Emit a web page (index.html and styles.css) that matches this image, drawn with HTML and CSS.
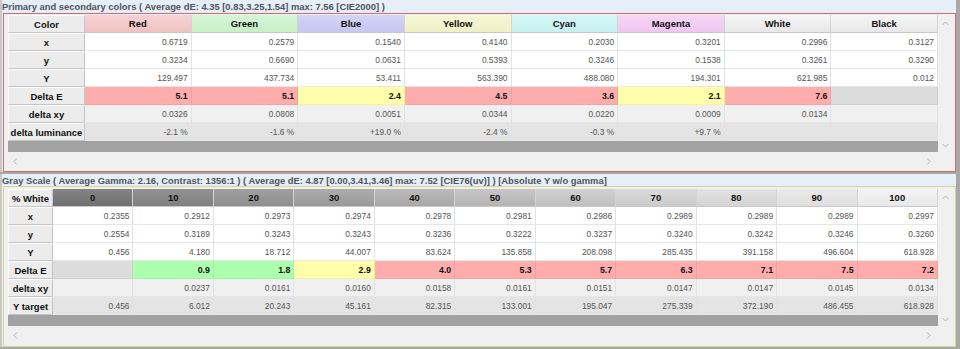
FILE: index.html
```html
<!DOCTYPE html>
<html>
<head>
<meta charset="utf-8">
<link rel="stylesheet" href="styles.css">
</head>
<body>
<div class="page">
  <section class="panel panel-primary">
    <div class="panel-title">Primary and secondary colors ( Average dE: 4.35 [0.83,3.25,1.54] max: 7.56 [CIE2000] )</div>
    <div class="panel-frame frame-red">
      <div class="widget">
        <div class="main">
          <div class="grid grid-colors">
            <div class="hd hd-first">Color</div>
            <div class="hd hd-red">Red</div>
            <div class="hd hd-green">Green</div>
            <div class="hd hd-blue">Blue</div>
            <div class="hd hd-yellow">Yellow</div>
            <div class="hd hd-cyan">Cyan</div>
            <div class="hd hd-magenta">Magenta</div>
            <div class="hd hd-neutral">White</div>
            <div class="hd hd-neutral">Black</div>

            <div class="rh">x</div>
            <div class="c">0.6719</div><div class="c">0.2579</div><div class="c">0.1540</div><div class="c">0.4140</div><div class="c">0.2030</div><div class="c">0.3201</div><div class="c">0.2996</div><div class="c">0.3127</div>

            <div class="rh">y</div>
            <div class="c">0.3234</div><div class="c">0.6690</div><div class="c">0.0631</div><div class="c">0.5393</div><div class="c">0.3246</div><div class="c">0.1538</div><div class="c">0.3261</div><div class="c">0.3290</div>

            <div class="rh">Y</div>
            <div class="c">129.497</div><div class="c">437.734</div><div class="c">53.411</div><div class="c">563.390</div><div class="c">488.080</div><div class="c">194.301</div><div class="c">621.985</div><div class="c">0.012</div>

            <div class="rh">Delta E</div>
            <div class="c de bad">5.1</div><div class="c de bad">5.1</div><div class="c de warn">2.4</div><div class="c de bad">4.5</div><div class="c de bad">3.6</div><div class="c de warn">2.1</div><div class="c de bad">7.6</div><div class="c de none"></div>

            <div class="rh">delta xy</div>
            <div class="c r-xy">0.0326</div><div class="c r-xy">0.0808</div><div class="c r-xy">0.0051</div><div class="c r-xy">0.0344</div><div class="c r-xy">0.0220</div><div class="c r-xy">0.0009</div><div class="c r-xy">0.0134</div><div class="c r-xy"></div>

            <div class="rh">delta luminance</div>
            <div class="c r-last">-2.1 %</div><div class="c r-last">-1.6 %</div><div class="c r-last">+19.0 %</div><div class="c r-last">-2.4 %</div><div class="c r-last">-0.3 %</div><div class="c r-last">+9.7 %</div><div class="c r-last"></div><div class="c r-last"></div>
          </div>
          <div class="band"></div>
        </div>
        <div class="vscroll">
          <svg class="arrow" width="7" height="5" viewBox="0 0 7 5"><path d="M0.5 4 L3.5 1 L6.5 4" fill="none" stroke="#b0b0b0" stroke-width="1"/></svg>
          <svg class="arrow" width="7" height="5" viewBox="0 0 7 5"><path d="M0.5 1 L3.5 4 L6.5 1" fill="none" stroke="#b0b0b0" stroke-width="1"/></svg>
        </div>
        <div class="hscroll">
          <svg class="arrow" width="5" height="7" viewBox="0 0 5 7"><path d="M4 0.5 L1 3.5 L4 6.5" fill="none" stroke="#b0b0b0" stroke-width="1"/></svg>
          <svg class="arrow" width="5" height="7" viewBox="0 0 5 7"><path d="M1 0.5 L4 3.5 L1 6.5" fill="none" stroke="#b0b0b0" stroke-width="1"/></svg>
        </div>
      </div>
    </div>
  </section>

  <section class="panel panel-gray">
    <div class="panel-title">Gray Scale ( Average Gamma: 2.16, Contrast: 1356:1 ) ( Average dE: 4.87 [0.00,3.41,3.46] max: 7.52 [CIE76(uv)] ) [Absolute Y w/o gamma]</div>
    <div class="panel-frame frame-yellow">
      <div class="widget">
        <div class="main">
          <div class="grid grid-gray">
            <div class="hd hd-first">% White</div>
            <div class="hd g0">0</div>
            <div class="hd g10">10</div>
            <div class="hd g20">20</div>
            <div class="hd g30">30</div>
            <div class="hd g40">40</div>
            <div class="hd g50">50</div>
            <div class="hd g60">60</div>
            <div class="hd g70">70</div>
            <div class="hd g80">80</div>
            <div class="hd g90">90</div>
            <div class="hd g100">100</div>

            <div class="rh">x</div>
            <div class="c">0.2355</div><div class="c">0.2912</div><div class="c">0.2973</div><div class="c">0.2974</div><div class="c">0.2978</div><div class="c">0.2981</div><div class="c">0.2986</div><div class="c">0.2989</div><div class="c">0.2989</div><div class="c">0.2989</div><div class="c">0.2997</div>

            <div class="rh">y</div>
            <div class="c">0.2554</div><div class="c">0.3189</div><div class="c">0.3243</div><div class="c">0.3243</div><div class="c">0.3236</div><div class="c">0.3222</div><div class="c">0.3237</div><div class="c">0.3240</div><div class="c">0.3242</div><div class="c">0.3246</div><div class="c">0.3260</div>

            <div class="rh">Y</div>
            <div class="c">0.456</div><div class="c">4.180</div><div class="c">18.712</div><div class="c">44.007</div><div class="c">83.624</div><div class="c">135.858</div><div class="c">208.098</div><div class="c">285.435</div><div class="c">391.158</div><div class="c">496.604</div><div class="c">618.928</div>

            <div class="rh">Delta E</div>
            <div class="c de none"></div><div class="c de good">0.9</div><div class="c de good">1.8</div><div class="c de warn">2.9</div><div class="c de bad">4.0</div><div class="c de bad">5.3</div><div class="c de bad">5.7</div><div class="c de bad">6.3</div><div class="c de bad">7.1</div><div class="c de bad">7.5</div><div class="c de bad">7.2</div>

            <div class="rh">delta xy</div>
            <div class="c r-xy"></div><div class="c r-xy">0.0237</div><div class="c r-xy">0.0161</div><div class="c r-xy">0.0160</div><div class="c r-xy">0.0158</div><div class="c r-xy">0.0161</div><div class="c r-xy">0.0151</div><div class="c r-xy">0.0147</div><div class="c r-xy">0.0147</div><div class="c r-xy">0.0145</div><div class="c r-xy">0.0134</div>

            <div class="rh">Y target</div>
            <div class="c r-last">0.456</div><div class="c r-last">6.012</div><div class="c r-last">20.243</div><div class="c r-last">45.161</div><div class="c r-last">82.315</div><div class="c r-last">133.001</div><div class="c r-last">195.047</div><div class="c r-last">275.339</div><div class="c r-last">372.190</div><div class="c r-last">486.455</div><div class="c r-last">618.928</div>
          </div>
          <div class="band"></div>
        </div>
        <div class="vscroll">
          <svg class="arrow" width="7" height="5" viewBox="0 0 7 5"><path d="M0.5 4 L3.5 1 L6.5 4" fill="none" stroke="#b0b0b0" stroke-width="1"/></svg>
          <svg class="arrow" width="7" height="5" viewBox="0 0 7 5"><path d="M0.5 1 L3.5 4 L6.5 1" fill="none" stroke="#b0b0b0" stroke-width="1"/></svg>
        </div>
        <div class="hscroll">
          <svg class="arrow" width="5" height="7" viewBox="0 0 5 7"><path d="M4 0.5 L1 3.5 L4 6.5" fill="none" stroke="#b0b0b0" stroke-width="1"/></svg>
          <svg class="arrow" width="5" height="7" viewBox="0 0 5 7"><path d="M1 0.5 L4 3.5 L1 6.5" fill="none" stroke="#b0b0b0" stroke-width="1"/></svg>
        </div>
      </div>
    </div>
  </section>
</div>
</body>
</html>
```
FILE: styles.css
```css
* { box-sizing: border-box; }
html, body { margin: 0; padding: 0; }
body {
  width: 960px;
  height: 349px;
  overflow: hidden;
  background: #a8a8a8;
  font-family: "Liberation Sans", Arial, sans-serif;
}
.page {
  display: flex;
  flex-direction: column;
  gap: 2px;
  width: 960px;
}
.panel {
  width: 956px;
  background: #f0f0f0;
  border-left: 2px solid #c8c8c8;
}
.panel-title {
  height: 13px;
  line-height: 13px;
  padding-left: 0;
  font-size: 9.4px;
  font-weight: bold;
  color: #4e555e;
  background: #e6eef7;
  border-top-right-radius: 3px;
  white-space: nowrap;
  overflow: hidden;
}
.panel-frame {
  margin-left: 1px;
  border: 1px solid #d46a6a;
  padding: 1px 2px 1px 4px;
  background: #f0f0f0;
}
.frame-yellow { border-color: #d4d88c; }
.panel-gray .panel-title { height: 11px; line-height: 11px; margin-top: 1px; }
.panel-gray .panel-frame { padding-top: 2px; padding-bottom: 2px; }

.widget {
  display: grid;
  grid-template-columns: 930px 14px;
  grid-template-rows: auto 18px;
  width: 944px;
  background: #f0f0f0;
}
.main { display: flex; flex-direction: column; }
.band { height: 11px; background: #a2a2a2; }
.vscroll {
  display: flex;
  flex-direction: column;
  justify-content: space-between;
  align-items: center;
  padding: 6px 0 4px;
  background: #f0f0f0;
}
.hscroll {
  grid-column: 1 / 2;
  display: flex;
  justify-content: space-between;
  align-items: center;
  padding: 0 7px 0 5px;
}
.arrow { display: block; }

.grid {
  display: grid;
  grid-auto-rows: 18px;
  background: #fff;
}
.grid-colors { grid-template-columns: 77px repeat(8, 1fr); }
.grid-gray { grid-template-columns: 45px repeat(11, 1fr); }

.hd {
  display: flex;
  align-items: center;
  justify-content: center;
  font-size: 9.5px;
  font-weight: bold;
  color: #111;
  border-right: 1px solid #d4d4d4;
  border-bottom: 1px solid #c8c8c8;
  background: linear-gradient(#f6f6f6, #e8e8e8);
}
.hd-first { background: #ececec; border: 1px solid #fff; border-right-color: #c8c8c8; border-bottom-color: #c8c8c8; }
.hd-red { background: linear-gradient(#f6d2d2, #f0c2c2); }
.hd-green { background: linear-gradient(#d6f6d6, #c6f0c6); }
.hd-blue { background: linear-gradient(#d4d4f6, #c6c6f0); }
.hd-yellow { background: linear-gradient(#f6f6d6, #f0f0c6); }
.hd-cyan { background: linear-gradient(#d6f6f6, #c6f0f0); }
.hd-magenta { background: linear-gradient(#f6d6f6, #f0c6f0); }
.hd-neutral { background: linear-gradient(#f6f6f6, #e8e8e8); }

.g0 { background: linear-gradient(#848484, #707070); }
.g10 { background: linear-gradient(#929292, #808080); }
.g20 { background: linear-gradient(#a0a0a0, #8e8e8e); }
.g30 { background: linear-gradient(#acacac, #9a9a9a); }
.g40 { background: linear-gradient(#bababa, #a8a8a8); }
.g50 { background: linear-gradient(#c6c6c6, #b4b4b4); }
.g60 { background: linear-gradient(#d0d0d0, #c0c0c0); }
.g70 { background: linear-gradient(#dadada, #cacaca); }
.g80 { background: linear-gradient(#e2e2e2, #d4d4d4); }
.g90 { background: linear-gradient(#eaeaea, #dedede); }
.g100 { background: linear-gradient(#f4f4f4, #e8e8e8); }

.rh {
  display: flex;
  align-items: center;
  justify-content: center;
  font-size: 9.5px;
  font-weight: bold;
  color: #111;
  white-space: nowrap;
  background: #ececec;
  border: 1px solid #fff;
  border-right-color: #c4c4c4;
  border-bottom-color: #c4c4c4;
}
.c {
  display: flex;
  align-items: center;
  justify-content: flex-end;
  padding-right: 3px;
  font-size: 8.4px;
  color: #555;
  background: #fff;
  border-right: 1px solid #e2e2e2;
  border-bottom: 1px solid #e6e6e6;
}
.de { font-weight: bold; color: #111; font-size: 8.8px; border-right-color: rgba(0,0,0,0.06); border-bottom-color: rgba(0,0,0,0.05); }
.bad { background: #ffacac; }
.warn { background: #ffffac; }
.good { background: #acffac; }
.none { background: #dcdcdc; }
.r-xy { background: #f0f0f0; }
.r-last { background: #e4e4e4; }
```
